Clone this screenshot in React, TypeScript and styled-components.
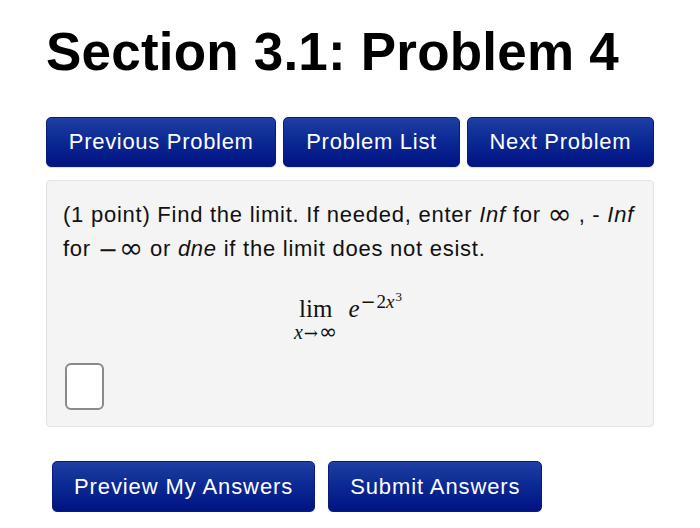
import React from 'react'
import styled, { createGlobalStyle } from 'styled-components'

const GlobalStyle = createGlobalStyle`
    html, body {
        margin: 0;
        padding: 0;
        background: #ffffff;
    }
    body {
        font-family: "Liberation Sans", Arial, sans-serif;
        color: #000;
    }
`

const NAV = ['Previous Problem', 'Problem List', 'Next Problem']

const App: React.FC = () => {
    return (
        <Page>
            <GlobalStyle />
            <Title>Section 3.1: Problem 4</Title>
            <NavRow>
                {NAV.map((label) => <NavButton key={label}>{label}</NavButton>)}
            </NavRow>
            <ProblemBox>
                <Statement>
                    (1 point) Find the limit. If needed, enter <i>Inf</i> for <Sym>∞</Sym> , - <i>Inf</i>
                    <br />
                    for <Sym><Minus>−</Minus>∞</Sym> or <i>dne</i> if the limit does not esist.
                </Statement>
                <MathLine>
                    <LimOp>
                        <span className="lim">lim</span>
                        <span className="under"><i>x</i><span className="arrow">→</span><span className="inf">∞</span></span>
                    </LimOp>
                    <Base>e</Base>
                    <Exp><span className="minus">−</span>2<i>x</i><sup>3</sup></Exp>
                </MathLine>
                <AnswerBox type="text" aria-label="answer" />
            </ProblemBox>
            <SubmitRow>
                <NavButton $fixed>Preview My Answers</NavButton>
                <NavButton $fixed>Submit Answers</NavButton>
            </SubmitRow>
        </Page>
    )
}

export default App

const Page = styled.div`
    width: 608px;
    padding: 0 0 0 46px;
`

const Title = styled.h1`
    margin: 0;
    padding-top: 22px;
    height: 117px;
    box-sizing: border-box;
    font-size: 53px;
    font-weight: bold;
    line-height: 60px;
    letter-spacing: 0.2px;
`

const NavRow = styled.div`
    display: flex;
    gap: 7px;
`

const NavButton = styled.button<{ $fixed?: boolean }>`
    height: ${({ $fixed }) => $fixed ? '51px' : '50px'};
    padding: 0 ${({ $fixed }) => $fixed ? '21px' : '20px'};
    flex: ${({ $fixed }) => $fixed ? '0 0 auto' : '1 1 auto'};
    border: 1px solid #0a1c78;
    border-radius: 5px;
    background: linear-gradient(#1f3fa3 0%, #0c2a94 45%, #001383 100%);
    color: #ffffff;
    font-family: "Liberation Sans", Arial, sans-serif;
    font-size: 22px;
    letter-spacing: ${({ $fixed }) => $fixed ? '0.9px' : '0.7px'};
    box-shadow: 0 1px 1px rgba(0, 0, 0, 0.15);
    cursor: pointer;
`

const ProblemBox = styled.div`
    margin-top: 13px;
    height: 247px;
    box-sizing: border-box;
    background: #f4f4f4;
    border: 1px solid #e3e3e3;
    border-radius: 4px;
    padding: 17px 4px 0 16px;
`

const Statement = styled.p`
    margin: 0;
    font-size: 22px;
    line-height: 34px;
    letter-spacing: 0.75px;
    color: #111;
    white-space: nowrap;
`

const Sym = styled.span`
    font-family: "DejaVu Sans", sans-serif;
    font-size: 29px;
    line-height: 20px;
    letter-spacing: 0;
    vertical-align: -2px;
`

const Minus = styled.span`
    display: inline-block;
    margin-right: 1px;
    font-family: "DejaVu Sans", sans-serif;
    font-size: 24px;
`

const MathLine = styled.div`
    display: flex;
    justify-content: center;
    align-items: flex-start;
    margin-top: 29px;
    padding-right: 16px;
    font-family: "Liberation Serif", "Times New Roman", serif;
    color: #111;
`

const LimOp = styled.span`
    display: inline-flex;
    flex-direction: column;
    align-items: center;
    .lim {
        font-size: 25px;
        line-height: 28px;
    }
    .under {
        display: flex;
        align-items: baseline;
        font-size: 20px;
        line-height: 18px;
        margin-top: 0;
    }
    .arrow {
        font-family: "DejaVu Serif", serif;
        font-size: 17px;
        margin: 0 1px;
    }
    .inf {
        font-family: "DejaVu Sans", sans-serif;
        font-size: 22px;
    }
`

const Base = styled.span`
    font-size: 25px;
    line-height: 28px;
    font-style: italic;
    margin-left: 11px;
`

const Exp = styled.span`
    font-size: 19px;
    line-height: 18px;
    margin-top: -7px;
    margin-left: 1px;
    .minus {
        font-family: "DejaVu Sans", sans-serif;
        font-size: 18px;
        margin-right: 1px;
    }
    sup {
        font-size: 13px;
        vertical-align: 7px;
        margin-left: 1px;
    }
`

const AnswerBox = styled.input`
    display: block;
    margin-top: 21px;
    margin-left: 2px;
    width: 39px;
    height: 47px;
    box-sizing: border-box;
    border: 2px solid #8a8a8a;
    border-radius: 6px;
    background: #ffffff;
`

const SubmitRow = styled.div`
    display: flex;
    gap: 13px;
    margin-top: 34px;
    margin-left: 6px;
`
